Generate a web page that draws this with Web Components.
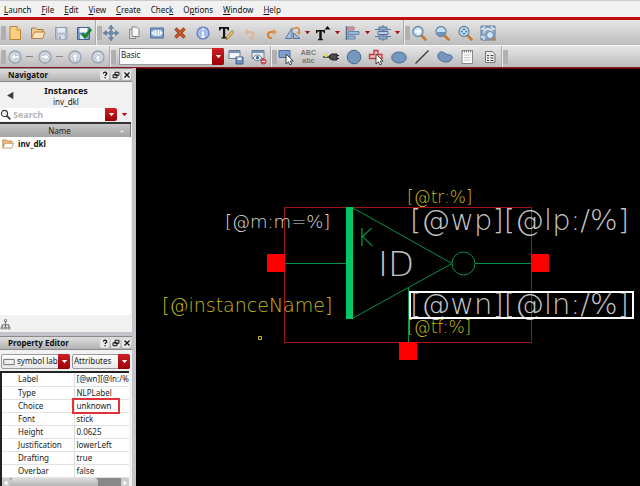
<!DOCTYPE html>
<html lang="en">
<head>
<meta charset="utf-8">
<title>Symbol Editor</title>
<style>
html, body { margin: 0; height: 100%; background: #000; }
body { font: 8px "Noto Sans", "DejaVu Sans", sans-serif; color: #222; overflow: hidden; }
</style>
</head>
<body>
<symbol-editor></symbol-editor>
<script>
const ball = '<circle cx="8" cy="8" r="6" fill="#d3d9e2" stroke="#98a2b3" stroke-width="1.3"/>';
const lens = '<path d="M10.5 10.5l4 4" stroke="#c77a2c" stroke-width="2.6" stroke-linecap="round"/><circle cx="7" cy="6.5" r="5" fill="#bfe0fa" stroke="#6f879f" stroke-width="1.3"/>';
const cursor = '<path d="M8 5v10l2.4-2.2 1.5 3 1.8-.9-1.5-2.9h3z" fill="#fff" stroke="#333" stroke-width=".9"/>';
const ICONS = {
  newfile: '<path d="M3 1.5h7l3.500 3.500v9.500H3z" fill="#f8cf82" stroke="#bb8130"/><path d="M10 1.500V5h3.500" fill="#fff1d0" stroke="#bb8130"/>',
  open: '<path d="M1.500 13V3h4l1.500 1.500h6V7" fill="#f4c98c" stroke="#a8794a"/><path d="M1.500 13.500L4.500 7H15l-2.500 6.500z" fill="#fde3b8" stroke="#b5814a"/>',
  save: '<path d="M2.500 2.500h11.500v11.500h-11.500z" fill="#b4c0d2" stroke="#8f9db2"/><path d="M4.500 3h7.500v4.500h-7.500z" fill="#e7ebf1"/><path d="M5 10h6.500v4H5z" fill="#dce1e9"/><path d="M6 11h2v3H6z" fill="#9ca8bb"/>',
  savecheck: '<path d="M1.500 2.500h12v12h-12z" fill="#7795c8" stroke="#415f94"/><path d="M3.500 3h8v4.500h-8z" fill="#f4f7fb"/><path d="M4 10h6.500v4H4z" fill="#dfe6f1"/><path d="M6 8.500l3 3.500 6-8" fill="none" stroke="#12852a" stroke-width="2.800"/>',
  move: '<path d="M8 1v14M1 8h14" stroke="#5f7c9a" stroke-width="1.500"/><path d="M8 0l2.500 3.500h-5zM8 16l2.500-3.500h-5zM0 8l3.500-2.500v5zM16 8l-3.500-2.500v5z" fill="#6c8bab" stroke="#4e6a88" stroke-width=".5"/><path d="M6 6h4v4H6z" fill="#6c8bab"/>',
  copy: '<path d="M3.500 4.500h6v9h-6z" fill="#e2e2e2" stroke="#8a8a8a"/><path d="M6 2h4.500l2.500 2.500v7H6z" fill="#f5f5f5" stroke="#858585"/>',
  stretch: '<path d="M1.500 3h13v10h-13z" fill="#7d9fc8" stroke="#4b6f9d"/><path d="M5.500 5h5v6h-5z" fill="#fff"/><path d="M2 8l3-3v6zM14 8l-3-3v6z" fill="#eef5ff"/><path d="M8 4v8" stroke="#7d9fc8"/>',
  del: '<path d="M3.500 3.500l9 9M12.500 3.500l-9 9" stroke="#9a3d16" stroke-width="3.400"/><path d="M3.500 3.500l9 9M12.500 3.500l-9 9" stroke="#c9622f" stroke-width="1.600"/>',
  info: '<circle cx="8" cy="8" r="6" fill="#a9bbeb" stroke="#6079bd" stroke-width="1.200"/><path d="M8 7v5M6.800 7.300H8M6.500 12h3" stroke="#fff" stroke-width="1.600"/><circle cx="8" cy="4.500" r="1.100" fill="#fff"/>',
  textedit: '<path d="M1 2h10v3.500H9.800L9 3.800H7.200v8.200l1.500.6V13.500H3.500v-.9l1.500-.6V3.800H3l-.8 1.700H1z" fill="#111"/><path d="M8 14.500l1-3 5-6 1.800 1.600-5 6z" fill="#f3c767" stroke="#8d6a2c" stroke-width=".8"/>',
  undo: '<path d="M6 7h3.500a3 3 0 010 6H9" fill="none" stroke="#dfb893" stroke-width="2"/><path d="M3.500 7l3.500-3.500v7z" fill="#dfb893"/>',
  redo: '<path d="M10 7H7a3 3 0 000 6h1" fill="none" stroke="#d9812f" stroke-width="2.200"/><path d="M13 7L9 3.500v7z" fill="#e69a4b"/>',
  rotate: '<path d="M.5 13.500L7 3v10.500z" fill="#a9bfdf" stroke="#57759f"/><path d="M8.500 13.500V8L15 13.500z" fill="#a9bfdf" stroke="#57759f"/><path d="M8 4c4-3 7-1 6 4" fill="none" stroke="#cf8e55" stroke-width="1.800"/><path d="M11.500 7h4.300L14 10z" fill="#cf8e55"/>',
  textup: '<path d="M1 5h9v3.200H9L8.200 6.600H6.700v7.200l1.300.5v.9H3v-.9l1.300-.5V6.600H2.800L2 8.200H1z" fill="#111"/><path d="M12.500 1l3 3.500h-6z" fill="#111"/>',
  align: '<path d="M1.500 1v14" stroke="#536b88" stroke-width="1.500"/><path d="M3 2h6v3H3z" fill="#d59aa2" stroke="#a76771" stroke-width=".8"/><path d="M3 6.500h11v3H3zM3 11h7v3H3z" fill="#9cb7d9" stroke="#58779f" stroke-width=".8"/>',
  distribute: '<path d="M8 0v16M0 4.500h16M0 11.500h16" stroke="#5b7597"/><path d="M4 2h8v3H4zM4 11h8v3H4z" fill="#91aed3" stroke="#54739a"/><path d="M3 6.500h10v3H3z" fill="#b8cce4" stroke="#54739a"/>',
  zoom: lens,
  zoomin: lens + '<path d="M7 3.500v6M4 6.500h6" stroke="#fff" stroke-width="1.800"/>',
  zoomout: lens + '<path d="M3 7h8a4 4 0 01-8 0z" fill="#6d93b8"/>',
  zoomfit: lens + '<path d="M7 3l1.500 2h-3zM7 10l1.500-2h-3zM3.500 6.500l2-1.500v3zM10.500 6.500l-2-1.500v3z" fill="#47709a"/>',
  zoomsel: '<path d="M1 1h14v14H1z" fill="#8da9c6" stroke="#607e9f"/><path d="M4 1v3H1M12 1v3h3M4 15v-3H1M4 8a4 4 0 018 0" fill="none" stroke="#e4edf7" stroke-width="1.300"/><path d="M12 12l3 3.500" stroke="#c77a2c" stroke-width="2"/><circle cx="10" cy="10" r="3.500" fill="#cfe8fb" stroke="#6f879f"/>',
  left: ball + '<path d="M4 8l4-3.500v2.200h4v2.600H8v2.200z" fill="#fff" stroke="#a9b2c0" stroke-width=".6"/>',
  right: ball + '<path d="M12 8L8 4.500v2.200H4v2.600h4v2.200z" fill="#fff" stroke="#a9b2c0" stroke-width=".6"/>',
  up: ball + '<path d="M8 4l3.500 4H9.300v4H6.700V8H4.500z" fill="#fff" stroke="#a9b2c0" stroke-width=".6"/>',
  top: ball + '<path d="M4.500 4h7v1.500h-7zM8 6l3.500 3.500H9.300V12.500H6.700V9.500H4.500z" fill="#fff" stroke="#a9b2c0" stroke-width=".6"/>',
  wsave: '<path d="M1 1.500h11v8H1z" fill="#f2f4f6" stroke="#6c7f94"/><path d="M1 2h11v2H1z" fill="#7895b3"/><path d="M8 8h7v7H8z" fill="#6e8fc0" stroke="#456594"/><path d="M9.500 8.500h4V11h-4z" fill="#fff"/>',
  wdel: '<path d="M1 1.500h12v8H1z" fill="#e5e9ee" stroke="#6c7f94"/><path d="M1 2h12v2H1z" fill="#7895b3"/><path d="M2 9c3-4 6-4 9 0-3 3.500-6 3.500-9 0z" fill="#fff" stroke="#55708d"/><circle cx="6.500" cy="8.700" r="1.800" fill="#4a7294"/><circle cx="12.500" cy="12.500" r="3" fill="#d6404a"/><path d="M10.800 12.500h3.400" stroke="#fff" stroke-width="1.200"/>',
  select: '<path d="M1 1.500h11v7H1z" fill="#7d9fd2" stroke="#4e70a5"/>' + cursor,
  probe: '<path d="M0 8h7" stroke="#222" stroke-width="1.300"/><circle cx="3" cy="6.500" r="1.700" fill="#e8d84a"/><path d="M6.500 6.500L9 5h5v6H9L6.500 9.500z" fill="#4a4a4a" stroke="#222"/><path d="M14 6.500h2M14 9.500h2" stroke="#222"/>',
  circle: '<circle cx="8" cy="8" r="6.800" fill="#7397be" stroke="#48698e"/>',
  redselect: '<path d="M6 1.500h4v4h4v4H1.500v-4H6z" fill="#eebcbf" stroke="#c23740" stroke-width="1.300"/>' + cursor,
  ellipse: '<ellipse cx="8" cy="8.500" rx="7.300" ry="5.500" fill="#7397be" stroke="#48698e"/>',
  line: '<path d="M1.500 14.500L14.500 1.500" stroke="#333" stroke-width="1.200"/>',
  blob: '<path d="M1 6c1-4 5-3.500 7-1.500s6 .5 7 3-2 5.500-6 5.500S0 10 1 6z" fill="#7397be" stroke="#48698e"/>',
  note: '<path d="M3 1.500h10.500v13H3z" fill="#fafafa" stroke="#888"/><path d="M3 2.500h10.500" stroke="#777" stroke-width="2" stroke-dasharray="1 1"/><path d="M5 6h6.500M5 8.500h6.500M5 11h6.500" stroke="#c6c6c6"/>',
  form: '<path d="M3.500 2.500h7l2.500 2.500v8.500H3.500z" fill="#e8e8e8" stroke="#777"/><path d="M5 6.500h2M8.500 6.500h3M5 9h2M8.500 9h3M5 11.500h2M8.500 11.500h3" stroke="#444" stroke-width="1.200"/>',
  search: '<circle cx="6.500" cy="6.500" r="4.500" fill="#eee" stroke="#333" stroke-width="1.600"/><path d="M10 10l5 5" stroke="#333" stroke-width="2.600"/>',
  folder: '<path d="M1 13V2.500h5L7.500 4H13v3" fill="#f0bd7e" stroke="#b07a3e"/><path d="M1 13.500L4 7h11.500L13 13.500z" fill="#fff" stroke="#b5814a"/>',
  tree: '<path d="M8 2v5M3 13V8.500h10V13M8 8v5" fill="none" stroke="#555" stroke-width="1.300"/><path d="M6.500 1h3v3h-3zM1.500 12h3v2.500h-3zM6.500 12h3v2.500h-3zM11.500 12h3v2.500h-3z" fill="#fff" stroke="#555"/>',
  label: '<path d="M1 4.500h14v7H1z" fill="#eee" stroke="#666" stroke-width="1.200"/>',
  help: '<path d="M5 5.500c0-4 6.500-4 6.500-.5 0 2.500-3.200 2.500-3.200 5M8.300 12v2.500" fill="none" stroke="#111" stroke-width="2.400"/>',
  float: '<path d="M6 2.500h8v6H6zM2 7.500h8v6H2z" fill="#ddd" stroke="#111" stroke-width="2"/>',
  close: '<path d="M3 3l10 10M13 3L3 13" stroke="#111" stroke-width="2.600"/>',
  down: '<path d="M2 4.500h12L8 12z" fill="currentColor"/>',
  back: '<path d="M13 1.500v13L2 8z" fill="#3c3c3c"/>',
  sort: '<path d="M1 12L8 4l7 8z" fill="#eee" stroke="#999"/>',
  sleft: '<path d="M11 3L4 8l7 5z" fill="#fff"/>',
  sright: '<path d="M5 3l7 5-7 5z" fill="#fff"/>'
};

function define(name, css, html) {
  customElements.define(name, class extends HTMLElement {
    connectedCallback() {
      if (this.shadowRoot) return;
      const at = (key, fallback = '') => this.getAttribute(key) ?? fallback;
      this.attachShadow({ mode: 'open' }).innerHTML =
        `<style>*{box-sizing:border-box}${css}</style>${html(at)}`;
    }
  });
}

define('ui-icon',
  ':host{display:inline-block;width:var(--icon,16px);height:var(--icon,16px);flex:none}svg{display:block;width:100%;height:100%}',
  at => `<svg viewBox="0 0 16 16" aria-hidden="true">${ICONS[at('name')]}</svg>`);

define('tool-button',
  `:host{display:flex;flex:none;width:23px;height:100%}:host([menu]){width:30px}
   button{all:unset;display:flex;flex:1;align-items:center;justify-content:center;gap:3px;color:#b00d12}
   .t{--icon:7px}.abc{font:bold 7px/8px "Liberation Sans",sans-serif;color:#777;text-align:center}`,
  at => `<button aria-label="${at('icon')}">${at('icon') === 'abc' ? '<span class="abc">ABC<br>abc</span>' : `<ui-icon name="${at('icon')}"></ui-icon>`}${at('menu') ? '<ui-icon class="t" name="down"></ui-icon>' : ''}</button>`);

define('tool-group',
  `:host{display:flex;align-items:center;height:100%;border-right:1px solid #aaa;box-shadow:1px 0 #eee;padding-left:1px}
   :host([last]){border:0;box-shadow:none}
   i{width:5px;height:14px;margin-right:-3px;background:#b0b0b0;flex:none}`,
  () => '<i></i><slot></slot>');

define('drop-down',
  `:host{display:flex;min-width:0}
   label{position:relative;display:flex;flex:1;min-width:0;align-items:center;background:linear-gradient(#fff,#e8e8e8);border:1px solid #999;border-radius:2px}
   :host([flat]) label{background:#fff;border-radius:0}
   select{all:unset;flex:1;min-width:0;height:100%;padding-left:1px;overflow:hidden;white-space:nowrap;color:#222}
   .b{display:flex;align-items:center;justify-content:center;align-self:stretch;width:12px;margin:-1px;background:linear-gradient(#d02026,#9c0005);color:#fff;--icon:7px;border-radius:0 2px 2px 0;pointer-events:none}
   .l{--icon:12px;margin:0 1px}`,
  at => `<label>${at('icon') ? `<ui-icon class="l" name="${at('icon')}"></ui-icon>` : ''}<select aria-label="${at('name')}"><option>${at('value')}</option></select><span class="b"><ui-icon name="down"></ui-icon></span></label>`);

define('menu-bar',
  `:host{display:block;background:#f1f1f1;border-top:1px solid #ccc;border-bottom:3px solid #c30d12}
   nav{display:flex;gap:10px;padding:2px 4px 0;height:16px;align-items:center}
   button{all:unset;line-height:14px;color:#111}u{text-underline-offset:1px}`,
  () => `<nav>${['Launch:0', 'File:0', 'Edit:0', 'View:0', 'Create:0', 'Check:4', 'Options:1', 'Window:0', 'Help:0'].map(s => {
    const [t, n] = s.split(':'), k = +n;
    return `<button>${t.slice(0, k)}<u>${t[k]}</u>${t.slice(k + 1)}</button>`;
  }).join('')}</nav>`);

const tools = list => list.split(' ').map(n => n === '-' ? '<b></b>' :
  `<tool-button icon="${n.replace('+', '')}"${n.endsWith('+') ? ' menu="1"' : ''}></tool-button>`).join('');

define('tool-bars',
  `:host{display:block;border-bottom:1px solid #8a1a1c}
   div{display:flex;height:26px;background:linear-gradient(#e6e6e6,#bcbcbc);border-bottom:1px solid #f3f3f3}
   div+div{height:21px;border:0}
   b{width:7px;height:1px;background:#888;flex:none}
   drop-down{width:105px;height:17px;margin-left:6px;flex:none}
   .tight{width:231px;justify-content:space-between}.tight tool-button{width:22px}`,
  () => `<div><tool-group>${tools('newfile open save savecheck')}</tool-group>
    <tool-group>${tools('move copy stretch del info textedit undo redo rotate+ textup+ align+ distribute+')}</tool-group>
    <tool-group last>${tools('zoomin zoomout zoomfit zoomsel')}</tool-group></div>
    <div><tool-group>${tools('left - right - up top')}</tool-group>
    <tool-group><drop-down flat name="Workspace" value="Basic"></drop-down>${tools('wsave wdel')}</tool-group>
    <tool-group class="tight">${tools('select abc probe circle redselect ellipse line blob note form')}</tool-group>
    <tool-group last></tool-group></div>`);

define('dock-panel',
  `:host{display:flex;flex-direction:column;background:#f1f1f1;min-height:0;min-width:0}
   header{display:flex;align-items:center;gap:2px;height:14px;flex:none;padding:0 1px 0 8px;background:linear-gradient(#dedede,#b2b2b2);border:solid #8a8a8a;border-width:1px 0}
   h2{flex:1;margin:0;font-size:8px;line-height:12px;color:#111}
   button{all:unset;display:flex;align-items:center;justify-content:center;width:9px;height:9px;background:#e9e9e9;border-radius:2px;--icon:8px}`,
  at => `<header><h2>${at('heading')}</h2>${['help', 'float', 'close'].map(n => `<button aria-label="${n}"><ui-icon name="${n}"></ui-icon></button>`).join('')}</header><slot></slot>`);

define('navigator-view',
  `:host{display:flex;flex-direction:column;flex:1;min-height:0;font-size:8px}
   .h{display:grid;grid-template-columns:20px 1fr 20px;align-items:center;text-align:center;height:26px;--icon:9px;line-height:11px;padding-top:1px}
   .h b{display:block;font-size:9px;color:#111}.h button,.m{all:unset;display:flex;justify-content:center}
   .s{display:flex;align-items:center;height:13px;background:#fff;--icon:11px}
   input{all:unset;flex:1;min-width:0;padding-left:2px;font-size:9px}input::placeholder{color:#b4b4b4;font-weight:bold;opacity:1}
   .d{all:unset;display:flex;align-items:center;justify-content:center;width:12px;height:13px;background:linear-gradient(#d02026,#9c0005);color:#fff;border-radius:0 2px 2px 0;--icon:7px}
   .m{width:15px;color:#b00d12;--icon:7px;background:#f1f1f1;height:13px;align-items:center}
   table{border-collapse:collapse;width:100%}
   .l{flex:1;background:#fff;margin-right:1px;border-top:2px solid #333;margin-top:1px}
   th{height:13px;padding:0;background:linear-gradient(#c6c6c6,#a4a4a4);font-weight:normal;border-right:1px solid #777}
   th span{display:flex;align-items:center;--icon:6px;padding-right:5px}th em{flex:1;font-style:normal}
   td{padding:0}td span{display:flex;align-items:center;gap:4px;height:13px;padding-left:2px;--icon:12px;font-weight:bold;color:#111}
   footer{height:17px;padding-top:4px;--icon:11px}`,
  () => `<div class="h"><button aria-label="Back"><ui-icon name="back"></ui-icon></button><span><b>Instances</b>inv_dkl</span></div>
   <div class="s"><ui-icon name="search"></ui-icon><input aria-label="Search" placeholder="Search"><button class="d" aria-label="Search history"><ui-icon name="down"></ui-icon></button><button class="m" aria-label="Options"><ui-icon name="down"></ui-icon></button></div>
   <div class="l"><table><tr><th><span><em>Name</em><ui-icon name="sort"></ui-icon></span></th></tr><tr><td><span><ui-icon name="folder"></ui-icon>inv_dkl</span></td></tr></table></div>
   <footer><ui-icon name="tree"></ui-icon></footer>`);

const PROPS = [['Label', '[@wn][@ln:/%]'], ['Type', 'NLPLabel'], ['Choice', 'unknown'], ['Font', 'stick'], ['Height', '0.0625'], ['Justification', 'lowerLeft'], ['Drafting', 'true'], ['Overbar', 'false']];
define('property-view',
  `:host{display:block;font-size:8px}
   .c{display:grid;grid-template-columns:69px 58px;gap:2px;padding:4px 0 2px 1px}
   drop-down{height:15px}
   .w{border:solid #222;border-width:2px 0 0 2px;margin-right:3px;background:#fff;overflow:hidden}
   table{border-collapse:collapse;width:100%;table-layout:fixed}
   th,td{height:13px;padding:0;line-height:12px;font-weight:normal;text-align:left;white-space:nowrap;border-bottom:1px solid #e2e2e2;color:#222;overflow:hidden}
   th{width:72px;padding-left:16px;border-right:1px solid #ddd}
   td{position:relative;padding-left:2px}
   td.on{overflow:visible}
   .box{position:absolute;left:-3px;top:-2px;width:48px;height:16px;border:2px solid #e0343a}
   .sb{display:flex;align-items:center;height:10px;background:#ccc;--icon:8px}
   .sb i{flex:1;height:10px;background:#888}.sb i::before{content:"";display:block;width:88px;height:10px;border-radius:4px;background:linear-gradient(#ddd,#aaa)}`,
  () => `<div class="c"><drop-down icon="label" name="Object type" value="symbol label"></drop-down><drop-down name="Category" value="Attributes"></drop-down></div>
   <div class="w"><table>${PROPS.map(([k, v]) => `<tr><th scope="row">${k}</th>${k === 'Choice' ? `<td class="on">${v}<span class="box"></span>` : `<td>${v}`}</td></tr>`).join('')}</table>
   <div class="sb"><ui-icon name="sleft"></ui-icon><i></i><ui-icon name="sright"></ui-icon></div></div>`);

define('symbol-canvas',
  `:host{display:block;background:#000;overflow:hidden;border-top:1px solid #500}
   svg{display:block;width:100%;height:100%}
   text{font-family:"DejaVu Sans Light","DejaVu Sans",sans-serif;font-weight:200}
   .big{font-size:29px;fill:#c4c4c4}.mid{font-size:18px;fill:#dcdcdc}.name{font-size:19px}.small{font-size:17px}.y{fill:#c8bc1c}`,
  () => `<svg viewBox="136 69 504 417" preserveAspectRatio="xMinYMin meet">
   <g fill="none" stroke="#a01414"><path d="M284.500 207.500h247v135h-247z"/></g>
   <g fill="none" stroke="#089048"><path d="M285 263.500h61M353 208L452 263.500 353 318M408.500 288v55M475 263.500h56"/><circle cx="463.500" cy="263.500" r="11.500"/></g>
   <path d="M346 207h7v112h-7z" fill="#00c864"/>
   <path d="M267 254h18v18h-18zM531 254h18v18h-18zM399 342h18v18h-18z" fill="#f00"/>
   <path d="M258.500 336.500h3v3h-3z" fill="none" stroke="#c8be1e"/>
   <text class="mid" x="225" y="228">[@m:m=%]</text>
   <text class="name y" x="162" y="312">[@instanceName]</text>
   <text class="small y" x="407" y="203">[@tr:%]</text>
   <text class="small y" x="407" y="333">[@tf:%]</text>
   <text x="357" y="246" font-size="25" fill="#089048">K</text>
   <text x="378" y="276" font-size="34" fill="#c4c4c4">ID</text>
   <text class="big" x="410" y="230">[@wp][@lp:/%]</text>
   <text class="big" x="410" y="314">[@wn][@ln:/%]</text>
   <path d="M410 292h223v26H410z" fill="none" stroke="#fff" stroke-width="2"/>
  </svg>`);

define('symbol-editor',
  `:host{display:flex;flex-direction:column;height:100vh}
   main{display:grid;grid-template-columns:136px minmax(0,1fr);flex:1;min-height:0}
   .w{display:grid;background:#c4c4cb;padding-right:4px;min-height:0;grid-template-columns:minmax(0,1fr)}
   aside{display:grid;grid-template:264px 1fr / minmax(0,1fr);gap:4px;min-height:0;overflow:hidden}`,
  () => `<menu-bar></menu-bar><tool-bars></tool-bars>
   <main><div class="w"><aside><dock-panel heading="Navigator"><navigator-view></navigator-view></dock-panel>
   <dock-panel heading="Property Editor"><property-view></property-view></dock-panel></aside></div>
   <symbol-canvas></symbol-canvas></main>`);
</script>
</body>
</html>
